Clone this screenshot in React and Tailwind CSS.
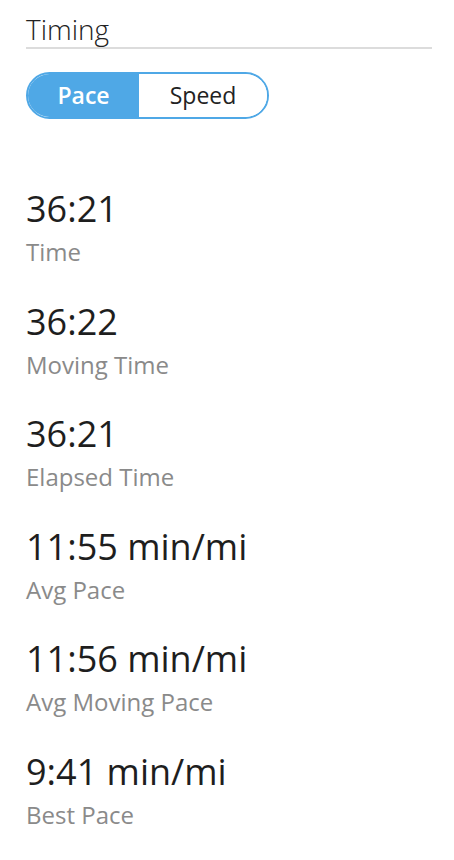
export default function App() {
  const stats = [
    { value: "36:21", label: "Time" },
    { value: "36:22", label: "Moving Time" },
    { value: "36:21", label: "Elapsed Time" },
    { value: "11:55 min/mi", label: "Avg Pace" },
    { value: "11:56 min/mi", label: "Avg Moving Pace" },
    { value: "9:41 min/mi", label: "Best Pace" },
  ];

  return (
    <div className="w-[454px] min-h-[860px] bg-white pl-[26px] pr-[22px] font-['Open_Sans',sans-serif]">
      <h2 className="pt-[11px] text-[28px] leading-[36px] font-light text-[#222] border-b-2 border-[#dcdcdc]">
        Timing
      </h2>

      <div className="mt-[23px] flex w-[243px] h-[47px] rounded-full border-2 border-[#4fa8e6] overflow-hidden">
        <button className="w-[111px] bg-[#4fa8e6] text-white text-[23px] font-semibold">
          Pace
        </button>
        <button className="flex-1 bg-white text-[#222] text-[23px]">
          Speed
        </button>
      </div>

      <div className="mt-[66px] flex flex-col gap-[28.5px]">
        {stats.map((s, i) => (
          <div key={i}>
            <div className="text-[36px] leading-[48px] text-[#1e1e1e]">{s.value}</div>
            <div className="mt-[2px] text-[24px] leading-[34px] text-[#8a8a8a]">{s.label}</div>
          </div>
        ))}
      </div>
    </div>
  );
}
